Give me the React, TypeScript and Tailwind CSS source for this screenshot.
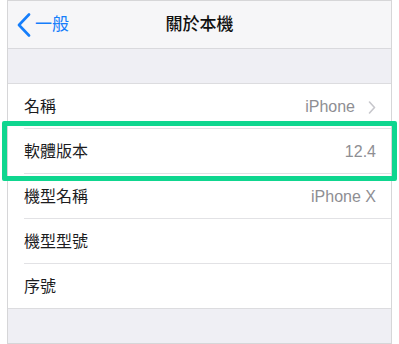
const rows = [
  { label: '名稱', value: 'iPhone', chevron: true },
  { label: '軟體版本', value: '12.4' },
  { label: '機型名稱', value: 'iPhone X' },
  { label: '機型型號', value: '' },
  { label: '序號', value: '' },
];

export default function App() {
  return (
    <div
      className="relative w-[399px] h-[344px] bg-white overflow-hidden"
      style={{ fontFamily: '"Liberation Sans", "Noto Sans CJK TC", sans-serif' }}
    >
      <div className="ml-[7px] w-[385px] h-[344px] border border-[#d6d6d8] flex flex-col bg-[#efeff4]">
        {/* Nav bar */}
        <div className="relative h-[48px] shrink-0 bg-[#f6f6f8] border-b border-[#d9d9dd] flex items-center">
          <div className="flex items-center pl-[9px] text-[#157efb]">
            <svg width="14" height="24" viewBox="0 0 14 24" fill="none">
              <path d="M12 1.5 L2 12 L12 22.5" stroke="#157efb" strokeWidth="2.6" strokeLinecap="round" strokeLinejoin="round" />
            </svg>
            <span className="ml-[4px] text-[17px] leading-none">一般</span>
          </div>
          <div className="absolute inset-0 flex items-center justify-center text-[17px] font-medium text-[#111]">
            關於本機
          </div>
        </div>

        {/* Section gap */}
        <div className="h-[35px] shrink-0 border-b border-[#dcdcdf]" />

        {/* Rows */}
        <div className="bg-white border-b border-[#dcdcdf]">
          {rows.map((row, i) => (
            <div key={i} className="pl-[16px]">
              <div
                className={`flex items-center pr-[15px] pt-[2px] ${i < rows.length - 1 ? 'h-[45px] border-b border-[#e2e2e5]' : 'h-[44px]'}`}
              >
                <span className="text-[16px] text-[#1c1c1e]">{row.label}</span>
                <span className="ml-auto text-[16px] text-[#8e8e93]">{row.value}</span>
                {row.chevron && (
                  <svg width="8" height="13" viewBox="0 0 8 13" fill="none" className="ml-[13px]">
                    <path d="M1.5 1 L6.5 6.5 L1.5 12" stroke="#c7c7cc" strokeWidth="1.6" strokeLinecap="round" strokeLinejoin="round" />
                  </svg>
                )}
              </div>
            </div>
          ))}
        </div>

        <div className="flex-1" />
      </div>

      {/* Highlight box */}
      <div className="absolute left-[2px] top-[121px] w-[395px] h-[60px] border-[5px] border-[#0fd68f] rounded-[2px]" />
    </div>
  );
}
